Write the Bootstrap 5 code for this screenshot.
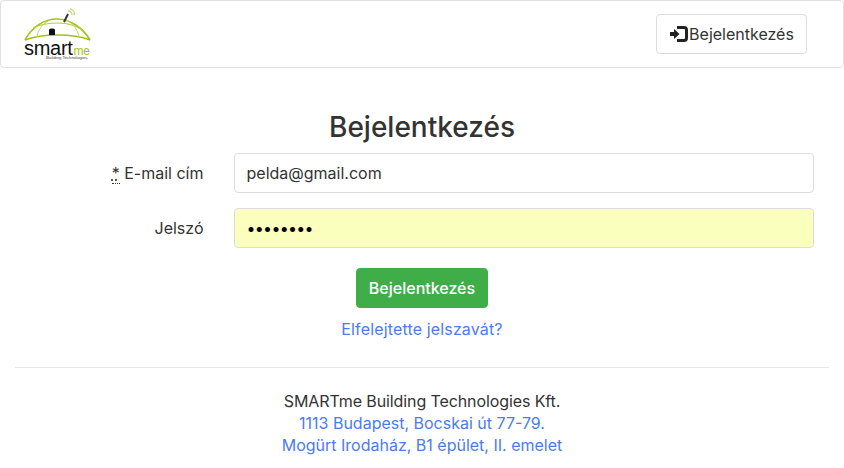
<!DOCTYPE html>
<html lang="hu">

<head>
  <meta charset="UTF-8" />
  <meta name="viewport" content="width=device-width, initial-scale=1" />
  <title>Bejelentkezés</title>
  <link href="https://cdn.jsdelivr.net/npm/bootstrap@5.3.0/dist/css/bootstrap.min.css" rel="stylesheet" />
  <style>
    body {
      font-family: Inter, "Liberation Sans", sans-serif;
      font-size: 16px;
      line-height: 22px;
      color: #333;
      background: #fff;
    }

    .top-bar {
      height: 68px;
      padding: 0 36px 0 23px;
      border: 1px solid #e1e1e1;
      border-radius: 4px;
    }

    .logo-box {
      position: relative;
      width: 70px;
      height: 52px;
    }

    .logo-box svg {
      position: absolute;
      left: 0;
      top: 0;
    }

    .logo-word {
      position: absolute;
      left: 0;
      top: 33px;
      font-family: "Liberation Sans", sans-serif;
      font-size: 20px;
      line-height: 14px;
      letter-spacing: -0.3px;
      white-space: nowrap;
      color: #111;
    }

    .logo-word span {
      margin-left: 1px;
      font-size: 12px;
      letter-spacing: -0.2px;
      color: #a5c21a;
    }

    .logo-sub {
      position: absolute;
      left: 22px;
      top: 47px;
      font-family: "Liberation Sans", sans-serif;
      font-size: 4.3px;
      line-height: 5px;
      white-space: nowrap;
      color: #444;
    }

    .login-top {
      height: 40px;
      width: 151px;
      padding: 0;
      font-size: 16px;
      color: #333;
      border: 1px solid #ddd;
      border-radius: 4px;
      background: #fff;
    }

    .main-area {
      padding: 0 15px;
    }

    .page-title {
      margin: 42px 0 9px;
      font-size: 28px;
      line-height: 34px;
      font-weight: 500;
      color: #333;
      text-align: center;
    }

    .form-line {
      --bs-gutter-x: 30px;
      margin: 0 0 15px;
    }

    .form-line label {
      padding-top: 9px;
      padding-bottom: 9px;
      text-align: right;
    }

    .form-line .form-control {
      height: 40px;
      padding: 8px 12px;
      font-size: 16px;
      line-height: 22px;
      color: #333;
      border: 1px solid #ddd;
      border-radius: 4px;
    }

    .form-line .pw-field {
      color: #000;
      background: #faffbd;
      letter-spacing: -0.7px;
    }

    .req-mark {
      text-decoration: none;
      border-bottom: 1px dotted #333;
      cursor: help;
    }

    .send-btn {
      height: 40px;
      width: 132px;
      padding: 0;
      margin-top: 5px;
      font-size: 16px;
      font-weight: 500;
      color: #fff;
      background: #3fae49;
      border: 1px solid #3fae49;
      border-radius: 4px;
    }

    a {
      color: #4a7cf0;
      text-decoration: none;
    }

    .forgot-link {
      margin-top: 10px;
      letter-spacing: 0.15px;
    }

    .foot-line {
      margin: 27px 0 22px;
      border: 0;
      border-top: 1px solid #e8e8e8;
      opacity: 1;
    }

    .foot-name {
      letter-spacing: -0.1px;
    }
  </style>
</head>

<body>
  <nav class="top-bar d-flex align-items-center justify-content-between">
    <a href="#" class="logo-box d-block">
      <svg width="70" height="34" viewBox="0 0 70 34" fill="none">
        <path d="M1 32C8 19 20 11 33 11C46 11 59 20 66 32" stroke="#a5c21a" stroke-width="1.7" />
        <path d="M9 20C17 16 26 15 34 15C44 15 52 17 60 23" stroke="#b4cc3c" stroke-width="1.2" />
        <path d="M1 32C12 28 22 27 33 27C45 27 56 28 66 32" stroke="#a5c21a" stroke-width="1.5" />
        <path d="M13 29C14 21 20 14 27 12M42 12C49 15 54 22 55 29" stroke="#c4d75e" stroke-width="1" />
        <path d="M25 27V22C25 20 31 20 31 22V27Z" fill="#111" />
        <path d="M40 14L44 6" stroke="#333" stroke-width="2" />
        <path d="M44 3C47 3 48 5 48 7M46 1C49 1 51 4 50 7" stroke="#b4cc3c" stroke-width="1" />
      </svg>
      <span class="logo-word">smart<span>me</span></span>
      <span class="logo-sub">Building Technologies</span>
    </a>
    <button type="button" class="btn login-top d-flex align-items-center justify-content-center">
      <svg width="20" height="16" viewBox="0 0 20 16">
        <path d="M1 6H5V3L10.5 8L5 13V10H1Z" fill="#222" />
        <path d="M8 1.5H15C16.5 1.5 17.5 2.5 17.5 4V12C17.5 13.5 16.5 14.5 15 14.5H8" fill="none" stroke="#222" stroke-width="3" />
      </svg>
      Bejelentkezés
    </button>
  </nav>

  <main class="main-area">
    <h1 class="page-title">Bejelentkezés</h1>
    <form>
      <div class="row form-line">
        <label class="col-3" for="email"><abbr class="req-mark" title="Kötelező">*</abbr> E-mail cím</label>
        <div class="col-9">
          <input class="form-control" id="email" type="text" value="pelda@gmail.com" />
        </div>
      </div>
      <div class="row form-line">
        <label class="col-3" for="pw">Jelszó</label>
        <div class="col-9">
          <input class="form-control pw-field" id="pw" type="password" value="12345678" />
        </div>
      </div>
      <div class="text-center">
        <button type="button" class="btn send-btn">Bejelentkezés</button>
        <div class="forgot-link"><a href="#">Elfelejtette jelszavát?</a></div>
      </div>
    </form>
    <hr class="foot-line" />
    <div class="text-center">
      <div class="foot-name">SMARTme Building Technologies Kft.</div>
      <div><a href="#">1113 Budapest, Bocskai út 77-79.</a></div>
      <div><a href="#">Mogürt Irodaház, B1 épület, II. emelet</a></div>
    </div>
  </main>

  <script src="https://cdn.jsdelivr.net/npm/bootstrap@5.3.0/dist/js/bootstrap.bundle.min.js"></script>
</body>

</html>
